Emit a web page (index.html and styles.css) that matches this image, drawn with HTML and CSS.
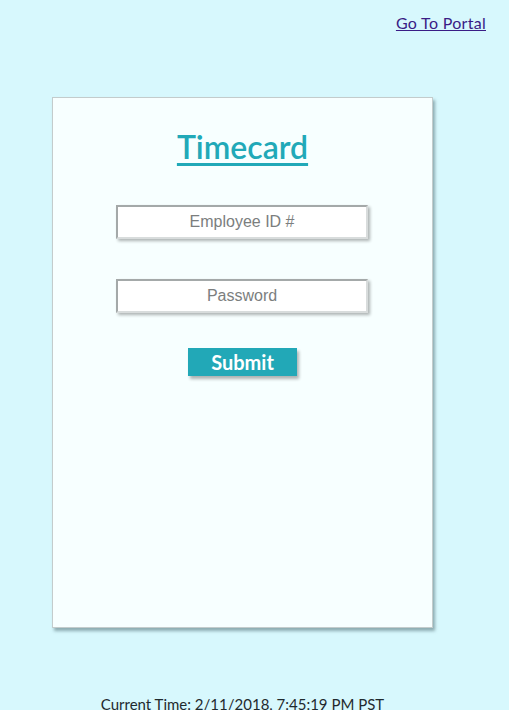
FILE: index.html
```html
<!DOCTYPE html>
<html>
<head>
<meta charset="utf-8">
<link rel="stylesheet" href="styles.css">
</head>
<body>
<header class="top">
  <a class="portal" href="#">Go To Portal</a>
</header>
<main class="wrap">
  <section class="card">
    <h1 class="title"><a href="#">Timecard</a></h1>
    <form class="form">
      <input class="field" type="text" placeholder="Employee ID #">
      <input class="field" type="password" placeholder="Password">
      <button class="submit" type="button">Submit</button>
    </form>
  </section>
  <p class="clock">Current Time: 2/11/2018, 7:45:19 PM PST</p>
</main>
</body>
</html>
```
FILE: styles.css
```css
html, body {
  background: #d7f8fd;
}
body {
  margin: 8px;
  font-family: "Lato", "DejaVu Sans", sans-serif;
  color: #1f2a2e;
}
.top {
  display: flex;
  justify-content: flex-end;
  padding: 6px 15px 0 0;
  height: 83px;
}
.portal {
  color: #3a1d86;
  font-size: 16px;
  letter-spacing: 0.3px;
  line-height: 18px;
}
.wrap {
  width: 381px;
  margin-left: 44px;
}
.card {
  box-sizing: border-box;
  height: 531px;
  background: #f7ffff;
  border: 1px solid #c3cccc;
  box-shadow: 2px 3px 3px rgba(80, 110, 115, 0.55);
  display: flex;
  flex-direction: column;
  align-items: center;
}
.title {
  margin: 29px 0 0;
  font-size: 32px;
  font-weight: 600;
  line-height: 40px;
}
.title a {
  color: #21a9b8;
  text-decoration-thickness: 3px;
  text-underline-offset: 4px;
}
.form {
  display: flex;
  flex-direction: column;
  align-items: center;
  margin-top: 38px;
  margin-left: -1px;
}
.field {
  box-sizing: border-box;
  width: 252px;
  height: 34px;
  margin: 0 0 40px;
  border: 2px solid #a4a9a9;
  border-right-color: #d8dcdc;
  border-bottom-color: #d8dcdc;
  background: #ffffff;
  box-shadow: 2px 2px 3px rgba(0, 0, 0, 0.3);
  font-family: "Liberation Sans", Arial, sans-serif;
  font-size: 16px;
  text-align: center;
  color: #333;
}
.field::placeholder {
  color: #7b7e7e;
}
.submit {
  width: 109px;
  height: 28px;
  margin: -5px 0 0 1px;
  border: none;
  background: #22a8b7;
  color: #ffffff;
  font-family: "Lato", sans-serif;
  font-weight: 700;
  font-size: 20px;
  line-height: 28px;
  padding: 0;
  box-shadow: 2px 3px 3px rgba(0, 0, 0, 0.3);
}
.clock {
  margin: 67px 0 0;
  text-align: center;
  font-size: 15px;
  letter-spacing: 0;
  line-height: 18px;
}
```
